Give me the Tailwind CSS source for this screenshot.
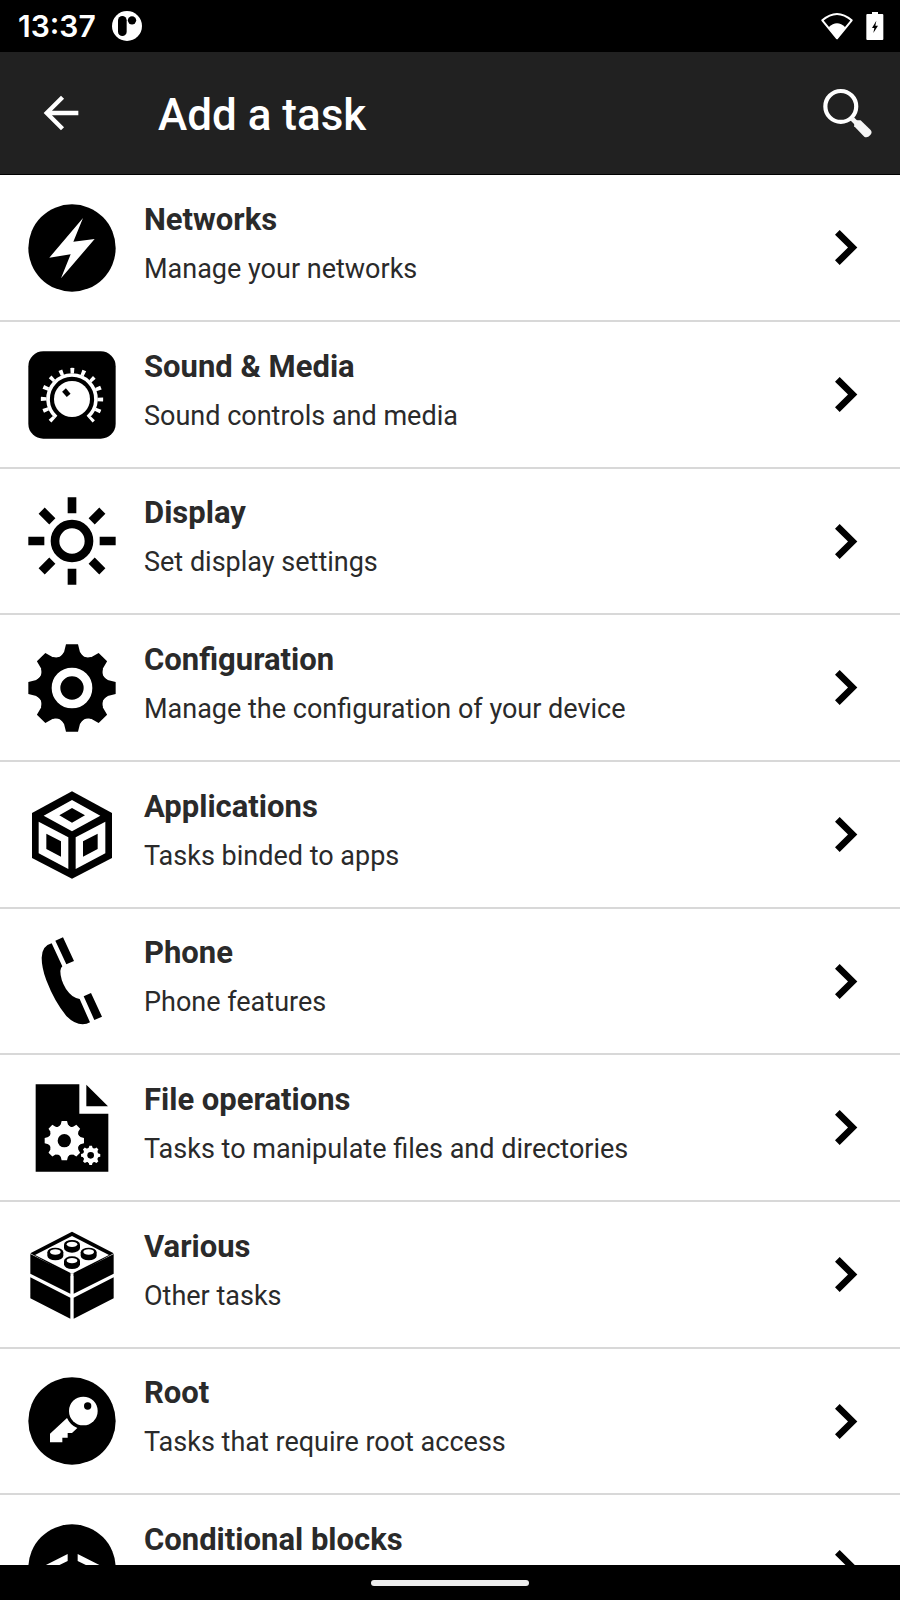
<!DOCTYPE html>
<html lang="en">
<head>
    <meta charset="UTF-8">
    <meta name="viewport" content="width=device-width, initial-scale=1.0">
    <title>Add a task</title>
    <script src="https://cdn.jsdelivr.net/npm/@tailwindcss/browser@4"></script>
</head>
<body class="h-screen flex flex-col overflow-hidden bg-white text-[#2a2a2a] font-['Roboto',sans-serif]">

    <!-- Shared shapes -->
    <svg class="hidden" aria-hidden="true">
        <symbol id="chevron" viewBox="0 0 69 105">
            <path d="M14 0L67 52.500 14 105 0 91 39 52.500 0 14z"/>
        </symbol>
        <g id="tooth"><path d="M-18-131H18L24-107C29-91 44-90 59-93L0 0-59-93C-44-90-29-91-24-107z"/></g>
        <g id="gear">
            <use href="#tooth"/>
            <use href="#tooth" transform="rotate(45)"/>
            <use href="#tooth" transform="rotate(90)"/>
            <use href="#tooth" transform="rotate(135)"/>
            <use href="#tooth" transform="rotate(180)"/>
            <use href="#tooth" transform="rotate(225)"/>
            <use href="#tooth" transform="rotate(270)"/>
            <use href="#tooth" transform="rotate(315)"/>
        </g>
        <g id="stud">
            <path d="M-24 0A24 14 0 0 1 24 0V10A24 14 0 0 1-24 10z"/>
            <ellipse cy="-1" rx="16" ry="8" fill="#fff"/>
        </g>
        <g id="brick">
            <path d="M-125-3L-5 58V116L-125 56zM-125 67L-5 128V191L-125 130z"/>
        </g>
    </svg>

    <!-- Status bar -->
    <div class="h-[52px] shrink-0 bg-black text-white flex items-center justify-between pl-[18px] pr-4">
        <div class="flex items-center gap-4">
            <span class="text-[30px] leading-[50px] font-semibold font-['Inter',sans-serif]">13:37</span>
            <svg class="size-[30px]" viewBox="0 0 90 90">
                <circle cx="45" cy="45" r="45" fill="#fff"/>
                <rect x="18" y="15" width="26" height="60" rx="13"/>
                <circle cx="60" cy="28" r="12.500"/>
            </svg>
        </div>
        <div class="flex items-center gap-[13px]">
            <svg class="w-8 h-7" viewBox="0 0 96 84">
                <path d="M4 25Q48-13 92 25L48 79z" fill="none" stroke="#fff" stroke-width="6" stroke-linejoin="round"/>
                <path d="M23 46Q48 22 73 46L48 80z" fill="#fff"/>
            </svg>
            <svg class="w-[18px] h-7" viewBox="0 0 54 84">
                <path d="M18 0H36V6H49Q52 6 52 9V81Q52 84 49 84H4Q1 84 1 81V9Q1 6 4 6H18z" fill="#fff"/>
                <path d="M31 26L18 48H25L22 63 36 41H28z"/>
            </svg>
        </div>
    </div>

    <!-- App bar -->
    <header class="h-[123px] shrink-0 bg-[#212121] text-white border-b border-black flex items-center pl-[35px] pr-[27px]">
        <button type="button" aria-label="Back">
            <svg class="size-[52px]" viewBox="0 0 24 24" fill="currentColor">
                <path d="M20 11H7.83l5.59-5.59L12 4l-8 8 8 8 1.41-1.41L7.83 13H20v-2z"/>
            </svg>
        </button>
        <h1 class="ml-[71px] pt-1 flex-1 text-[44px] leading-[52px] font-medium">Add a task</h1>
        <button type="button" aria-label="Search">
            <svg class="size-[51px]" viewBox="0 0 152 152">
                <circle cx="56" cy="55" r="46" fill="none" stroke="#fff" stroke-width="12.500"/>
                <path d="M88 90L102 104" stroke="#f5f5f5" stroke-width="14"/>
                <path d="M103 96H115L145 125Q151 132 144 140 135 150 126 145L96 114V103z" fill="#f5f5f5"/>
            </svg>
        </button>
    </header>

    <!-- Task categories -->
    <main class="flex-1 min-h-0 overflow-hidden">
        <ul>
            <li class="h-[147px] border-b-2 border-[#d8d8d8]">
                <a href="#" class="h-full flex items-center gap-7 pl-7 pr-[42px]">
                    <svg class="size-[88px]" viewBox="85 69 264 264">
                        <circle cx="217" cy="201" r="131"/>
                        <path d="M250 111L221 182 285 174 184 292 213 220 149 230z" fill="#fff"/>
                    </svg>
                    <div class="flex-1 pb-[6px]">
                        <h2 class="text-[31px] leading-[48px] font-bold">Networks</h2>
                        <p class="text-[27px] leading-[50px]">Manage your networks</p>
                    </div>
                    <svg class="w-[23px] h-[35px]"><use href="#chevron"/></svg>
                </a>
            </li>
            <li class="h-[147px] border-b-2 border-[#d8d8d8]">
                <a href="#" class="h-full flex items-center gap-7 pl-7 pr-[42px]">
                    <svg class="size-[88px]" viewBox="85 59 264 264">
                        <rect x="86" y="60" width="262" height="262" rx="45"/>
                        <g fill="none" stroke="#fff">
                            <path d="M169.500 257.100A72 72 0 1 1 264.500 257.100" stroke-width="11"/>
                            <path d="M160.900 266.900A85 85 0 1 1 273.100 266.900" stroke-width="17" stroke-dasharray="11 22.400"/>
                        </g>
                        <circle cx="217" cy="203" r="54" fill="#fff"/>
                        <path d="M193 176L207 192" stroke="#000" stroke-width="15"/>
                    </svg>
                    <div class="flex-1 pb-[6px]">
                        <h2 class="text-[31px] leading-[48px] font-bold">Sound &amp; Media</h2>
                        <p class="text-[27px] leading-[50px]">Sound controls and media</p>
                    </div>
                    <svg class="w-[23px] h-[35px]"><use href="#chevron"/></svg>
                </a>
            </li>
            <li class="h-[146px] border-b-2 border-[#d8d8d8]">
                <a href="#" class="h-full flex items-center gap-7 pl-7 pr-[42px]">
                    <svg class="size-[88px]" viewBox="-132 -132 264 264" fill="none" stroke="#000" stroke-width="26">
                        <circle r="51"/>
                        <path d="M0-131V-83M0 83V131M-131 0H-83M83 0H131M-91-91L-59-59M59 59L91 91M91-91L59-59M-59 59L-91 91"/>
                    </svg>
                    <div class="flex-1 pb-[6px]">
                        <h2 class="text-[31px] leading-[48px] font-bold">Display</h2>
                        <p class="text-[27px] leading-[50px]">Set display settings</p>
                    </div>
                    <svg class="w-[23px] h-[35px]"><use href="#chevron"/></svg>
                </a>
            </li>
            <li class="h-[147px] border-b-2 border-[#d8d8d8]">
                <a href="#" class="h-full flex items-center gap-7 pl-7 pr-[42px]">
                    <svg class="size-[88px]" viewBox="-132 -132 264 264">
                        <use href="#gear"/>
                        <circle r="48" stroke="#fff" stroke-width="26"/>
                    </svg>
                    <div class="flex-1 pb-[6px]">
                        <h2 class="text-[31px] leading-[48px] font-bold">Configuration</h2>
                        <p class="text-[27px] leading-[50px]">Manage the configuration of your device</p>
                    </div>
                    <svg class="w-[23px] h-[35px]"><use href="#chevron"/></svg>
                </a>
            </li>
            <li class="h-[147px] border-b-2 border-[#d8d8d8]">
                <a href="#" class="h-full flex items-center gap-7 pl-7 pr-[42px]">
                    <svg class="size-[88px]" viewBox="85 59 264 264">
                        <path d="M217 60L337 125V260L217 322 97 260V125z"/>
                        <path d="M217 86L302 133 217 180 132 133zM117 151L206 198V293L117 246zM317 151L228 198V293L317 246z" fill="#fff"/>
                        <path d="M217 110L256 132 217 154 179 132zM140 187L184 210V256L140 233zM294 187L250 210V256L294 233z"/>
                    </svg>
                    <div class="flex-1 pb-[6px]">
                        <h2 class="text-[31px] leading-[48px] font-bold">Applications</h2>
                        <p class="text-[27px] leading-[50px]">Tasks binded to apps</p>
                    </div>
                    <svg class="w-[23px] h-[35px]"><use href="#chevron"/></svg>
                </a>
            </li>
            <li class="h-[146px] border-b-2 border-[#d8d8d8]">
                <a href="#" class="h-full flex items-center gap-7 pl-7 pr-[42px]">
                    <svg class="size-[88px]" viewBox="85 50 264 264">
                        <path d="M156 69L188 138Q182 143 182 152 182 178 199 206 218 234 240 236L271 306Q262 312 249 312 225 312 200 287 165 245 140 180 126 142 126 112 126 95 134 83 142 73 156 69z"/>
                        <path d="M167 61L190 51 223 122 200 132zM252 228L274 218 307 289 284 299z"/>
                    </svg>
                    <div class="flex-1 pb-[6px]">
                        <h2 class="text-[31px] leading-[48px] font-bold">Phone</h2>
                        <p class="text-[27px] leading-[50px]">Phone features</p>
                    </div>
                    <svg class="w-[23px] h-[35px]"><use href="#chevron"/></svg>
                </a>
            </li>
            <li class="h-[147px] border-b-2 border-[#d8d8d8]">
                <a href="#" class="h-full flex items-center gap-7 pl-7 pr-[42px]">
                    <svg class="size-[88px]" viewBox="85 69 264 264">
                        <path d="M108 70H239V158H326V332H108zM260 71L325 136H260z"/>
                        <g fill="#fff">
                            <use href="#gear" transform="translate(194 239) scale(.45)"/>
                            <use href="#gear" transform="translate(273 283) scale(.22)"/>
                        </g>
                        <circle cx="194" cy="239" r="20"/>
                        <circle cx="273" cy="283" r="10"/>
                    </svg>
                    <div class="flex-1 pb-[6px]">
                        <h2 class="text-[31px] leading-[48px] font-bold">File operations</h2>
                        <p class="text-[27px] leading-[50px]">Tasks to manipulate files and directories</p>
                    </div>
                    <svg class="w-[23px] h-[35px]"><use href="#chevron"/></svg>
                </a>
            </li>
            <li class="h-[147px] border-b-2 border-[#d8d8d8]">
                <a href="#" class="h-full flex items-center gap-7 pl-7 pr-[42px]">
                    <svg class="size-[88px]" viewBox="85 59 264 264">
                        <path d="M217 61L342 126 217 196 92 126z"/>
                        <path d="M217 74L328 131 217 187 106 131z" fill="#fff"/>
                        <path d="M212 186H222V200H212z" fill="#fff"/>
                        <use href="#brick" transform="translate(217 131)"/>
                        <use href="#brick" transform="translate(217 131) scale(-1 1)"/>
                        <use href="#stud" x="217" y="100"/>
                        <use href="#stud" x="167" y="123"/>
                        <use href="#stud" x="267" y="123"/>
                        <use href="#stud" x="217" y="149"/>
                    </svg>
                    <div class="flex-1 pb-[6px]">
                        <h2 class="text-[31px] leading-[48px] font-bold">Various</h2>
                        <p class="text-[27px] leading-[50px]">Other tasks</p>
                    </div>
                    <svg class="w-[23px] h-[35px]"><use href="#chevron"/></svg>
                </a>
            </li>
            <li class="h-[146px] border-b-2 border-[#d8d8d8]">
                <a href="#" class="h-full flex items-center gap-7 pl-7 pr-[42px]">
                    <svg class="size-[88px]" viewBox="85 50 264 264">
                        <circle cx="217" cy="182" r="131"/>
                        <g fill="#fff">
                            <circle cx="251" cy="152" r="43"/>
                            <path d="M202 173Q212 195 233 203L217 218H204V232H188V246H151V220z"/>
                        </g>
                        <circle cx="264" cy="137" r="11"/>
                    </svg>
                    <div class="flex-1 pb-[6px]">
                        <h2 class="text-[31px] leading-[48px] font-bold">Root</h2>
                        <p class="text-[27px] leading-[50px]">Tasks that require root access</p>
                    </div>
                    <svg class="w-[23px] h-[35px]"><use href="#chevron"/></svg>
                </a>
            </li>
            <li class="h-[147px] border-b-2 border-[#d8d8d8]">
                <a href="#" class="h-full flex items-center gap-7 pl-7 pr-[42px]">
                    <svg class="size-[88px]" viewBox="0 0 264 264">
                        <circle cx="132" cy="132" r="131"/>
                        <path d="M119 90L36 132 119 174V153L76 132 119 111zM149 90L232 132 149 174V153L192 132 149 111z" fill="#fff"/>
                    </svg>
                    <div class="flex-1 h-[104px]">
                        <h2 class="text-[31px] leading-[48px] font-bold">Conditional blocks</h2>
                    </div>
                    <svg class="w-[23px] h-[35px]"><use href="#chevron"/></svg>
                </a>
            </li>
        </ul>
    </main>

    <!-- Gesture bar -->
    <div class="h-[35px] shrink-0 bg-black flex items-center justify-center">
        <div class="w-[158px] h-[6px] rounded-full bg-[#ececec]"></div>
    </div>
</body>
</html>
